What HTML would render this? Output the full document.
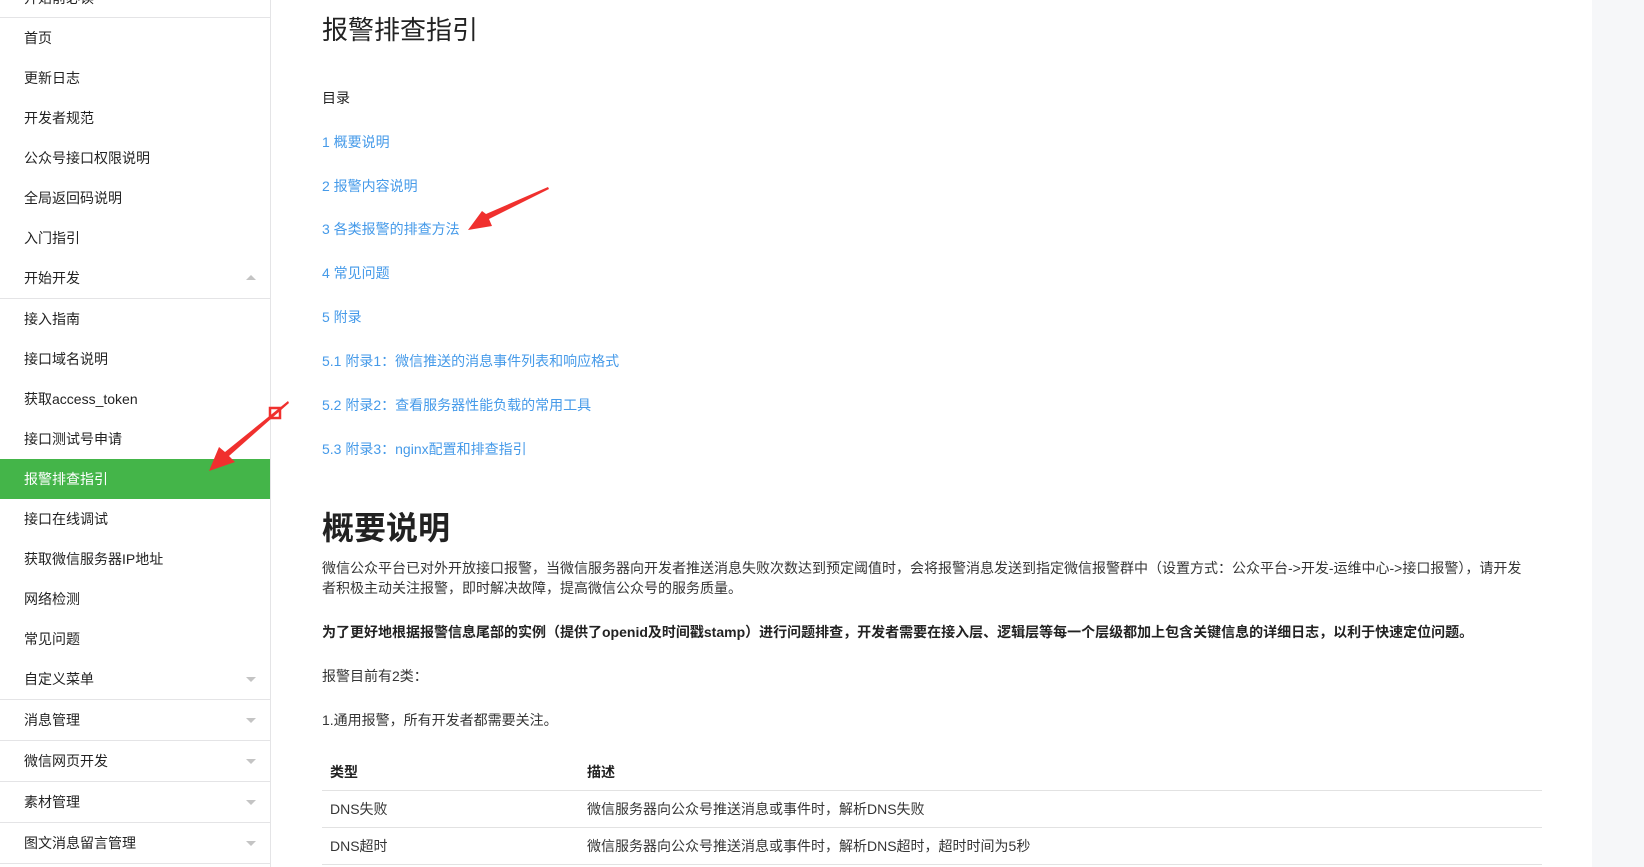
<!DOCTYPE html>
<html><head><meta charset="utf-8"><style>
*{margin:0;padding:0;box-sizing:border-box}
body{width:1644px;height:867px;overflow:hidden;background:#fff;font-family:"Liberation Sans","Noto Sans CJK SC",sans-serif;color:#353535;position:relative}
.sb{position:absolute;left:0;top:0;width:271px;height:867px;border-right:1px solid #e4e4e6}
.it{position:absolute;left:0;width:270px;height:40px;line-height:40px;padding-left:24px;font-size:14px;color:#222}
.ln{position:absolute;left:0;width:270px;height:1px;background:#e4e4e6}
.act{background:#44b549;color:#fff}
.car{position:absolute;right:14px;top:18px;width:0;height:0;border-left:5px solid transparent;border-right:5px solid transparent;border-top:5px solid #c4c4c4}
.up{border-top:none;border-bottom:5px solid #c4c4c4;top:17px}
.rp{position:absolute;left:1592px;top:0;width:52px;height:867px;background:#f6f7f9}
.t{position:absolute;left:322px;white-space:nowrap}
.a{color:#459ae9;font-size:14px;line-height:20px}
.p{font-size:14px;line-height:20px;color:#353535}
.tl{position:absolute;left:322px;width:1220px;height:1px;background:#e2e2e2}
</style></head><body>
<div class="sb">
<div class="it" style="top:-22px">开始前必读</div>
<div class="ln" style="top:17px"></div>
<div class="it" style="top:18px">首页</div>
<div class="it" style="top:58px">更新日志</div>
<div class="it" style="top:98px">开发者规范</div>
<div class="it" style="top:138px">公众号接口权限说明</div>
<div class="it" style="top:178px">全局返回码说明</div>
<div class="it" style="top:218px">入门指引</div>
<div class="it" style="top:258px">开始开发<span class="car up"></span></div>
<div class="ln" style="top:298px"></div>
<div class="it" style="top:299px">接入指南</div>
<div class="it" style="top:339px">接口域名说明</div>
<div class="it" style="top:379px">获取access_token</div>
<div class="it" style="top:419px">接口测试号申请</div>
<div class="it act" style="top:459px">报警排查指引</div>
<div class="it" style="top:499px">接口在线调试</div>
<div class="it" style="top:539px">获取微信服务器IP地址</div>
<div class="it" style="top:579px">网络检测</div>
<div class="it" style="top:619px">常见问题</div>
<div class="it" style="top:659px">自定义菜单<span class="car"></span></div>
<div class="ln" style="top:699px"></div>
<div class="it" style="top:700px">消息管理<span class="car"></span></div>
<div class="ln" style="top:740px"></div>
<div class="it" style="top:741px">微信网页开发<span class="car"></span></div>
<div class="ln" style="top:781px"></div>
<div class="it" style="top:782px">素材管理<span class="car"></span></div>
<div class="ln" style="top:822px"></div>
<div class="it" style="top:823px">图文消息留言管理<span class="car"></span></div>
<div class="ln" style="top:863px"></div>
</div>
<div class="rp"></div>

<div class="t" style="top:12px;font-size:26px;line-height:36px;color:#222">报警排查指引</div>
<div class="t p" style="top:88px;color:#222">目录</div>
<div class="t a" style="top:132px">1 概要说明</div>
<div class="t a" style="top:176px">2 报警内容说明</div>
<div class="t a" style="top:219px">3 各类报警的排查方法</div>
<div class="t a" style="top:263px">4 常见问题</div>
<div class="t a" style="top:307px">5 附录</div>
<div class="t a" style="top:351px">5.1 附录1：微信推送的消息事件列表和响应格式</div>
<div class="t a" style="top:395px">5.2 附录2：查看服务器性能负载的常用工具</div>
<div class="t a" style="top:439px">5.3 附录3：nginx配置和排查指引</div>

<div class="t" style="top:506px;font-size:32px;line-height:44px;font-weight:bold;color:#222">概要说明</div>
<div class="t p" style="top:558px">微信公众平台已对外开放接口报警，当微信服务器向开发者推送消息失败次数达到预定阈值时，会将报警消息发送到指定微信报警群中（设置方式：公众平台->开发-运维中心->接口报警），请开发</div>
<div class="t p" style="top:578px">者积极主动关注报警，即时解决故障，提高微信公众号的服务质量。</div>
<div class="t p" style="top:622px;font-weight:bold;color:#222">为了更好地根据报警信息尾部的实例（提供了openid及时间戳stamp）进行问题排查，开发者需要在接入层、逻辑层等每一个层级都加上包含关键信息的详细日志，以利于快速定位问题。</div>
<div class="t p" style="top:666px">报警目前有2类：</div>
<div class="t p" style="top:710px">1.通用报警，所有开发者都需要关注。</div>

<div class="t p" style="top:762px;left:330px;font-weight:bold;color:#222">类型</div>
<div class="t p" style="top:762px;left:587px;font-weight:bold;color:#222">描述</div>
<div class="tl" style="top:790px"></div>
<div class="t p" style="top:799px;left:330px">DNS失败</div>
<div class="t p" style="top:799px;left:587px">微信服务器向公众号推送消息或事件时，解析DNS失败</div>
<div class="tl" style="top:827px"></div>
<div class="t p" style="top:836px;left:330px">DNS超时</div>
<div class="t p" style="top:836px;left:587px">微信服务器向公众号推送消息或事件时，解析DNS超时，超时时间为5秒</div>
<div class="tl" style="top:864px"></div>

<svg style="position:absolute;left:0;top:0" width="1644" height="867">
<rect x="270" y="408" width="10" height="10" fill="none" stroke="#f0302e" stroke-width="2.5"/>
<polygon points="288,401 289,403 229,456 235,462 209,471 219,447 225,452" fill="#f0302e"/>
<polygon points="548,187 549,189 489,219 492,226 468,230 482,211 486,214" fill="#f0302e"/>
</svg>
</body></html>
